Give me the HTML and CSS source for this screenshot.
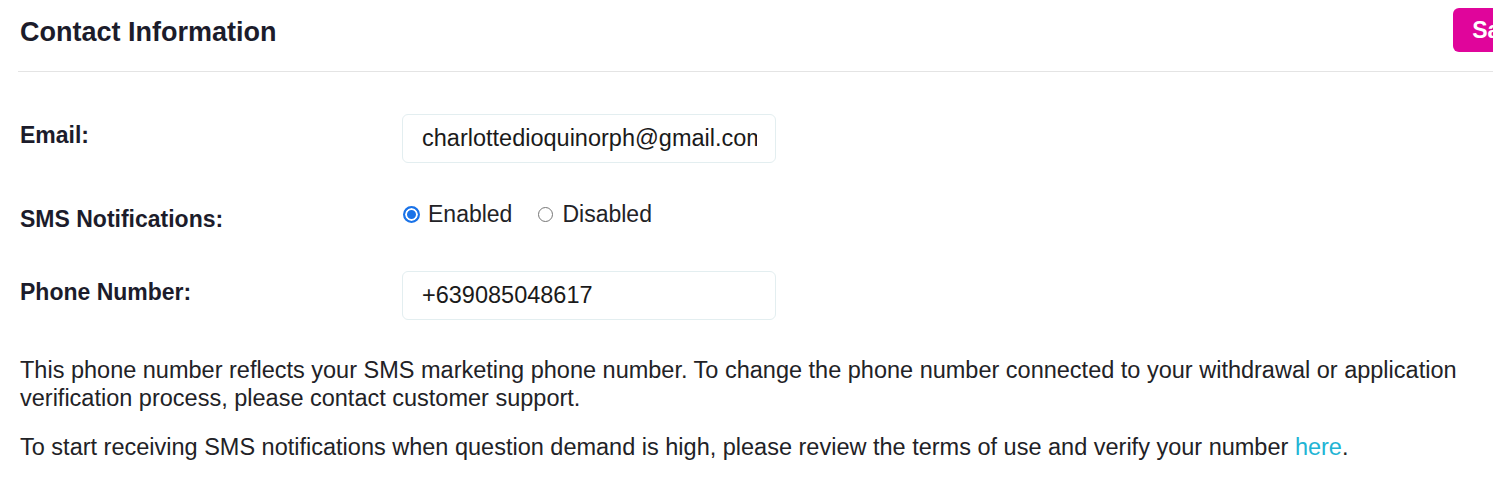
FILE: index.html
```html
<!DOCTYPE html>
<html lang="en">
<head>
    <meta charset="UTF-8">
    <meta name="viewport" content="width=device-width, initial-scale=1.0">
    <title>Contact Information</title>
    <link rel="stylesheet" href="styles.css">
</head>
<body>
    <div class="panel">
        <!-- Cabecera con título y botón de guardar -->
        <div class="panel-header">
            <h2 class="panel-title">Contact Information</h2>
            <button class="btn-save">Save</button>
        </div>

        <!-- Formulario -->
        <div class="form">
            <div class="form-row">
                <label class="form-label" for="email">Email:</label>
                <input class="form-input" id="email" type="text" value="charlottedioquinorph@gmail.com">
            </div>

            <div class="form-row">
                <span class="form-label">SMS Notifications:</span>
                <div class="radio-group">
                    <label class="radio"><span class="radio-dot checked"></span>Enabled</label>
                    <label class="radio"><span class="radio-dot"></span>Disabled</label>
                </div>
            </div>

            <div class="form-row">
                <label class="form-label" for="phone">Phone Number:</label>
                <input class="form-input" id="phone" type="text" value="+639085048617">
            </div>
        </div>

        <p class="note">This phone number reflects your SMS marketing phone number. To change the phone number connected to your withdrawal or application verification process, please contact customer support.</p>
        <p class="note">To start receiving SMS notifications when question demand is high, please review the terms of use and verify your number <a href="#" class="link">here</a>.</p>
    </div>
</body>
</html>
```

FILE: styles.css
```css
body {
    margin: 0;
    padding: 0;
    background: #ffffff;
    font-family: "Liberation Sans", Arial, sans-serif;
    color: #222226;
    overflow: hidden;
}

/* Contenedor principal (más ancho que la ventana, el botón queda cortado) */
.panel {
    width: 1527px;
    padding-left: 18px;
}

/* Cabecera */
.panel-header {
    display: flex;
    justify-content: space-between;
    align-items: center;
    padding: 8px 0 19px;
    border-bottom: 1px solid #e4e4e4;
}

.panel-title {
    margin: 0 0 0 2px;
    font-size: 27px;
    font-weight: 700;
    color: #1c1c2b;
    line-height: 32px;
    position: relative;
    top: 2px;
}

.btn-save {
    height: 44px;
    padding: 0 19px;
    background: #e0059b;
    color: #ffffff;
    border: none;
    border-radius: 6px;
    font-family: inherit;
    font-size: 23px;
    font-weight: 700;
    cursor: pointer;
}

/* Filas del formulario */
.form {
    padding: 42px 0 0 2px;
    display: flex;
    flex-direction: column;
    gap: 35px;
}

.form-row {
    display: grid;
    grid-template-columns: 382px 374px;
    align-items: start;
}

.form-label {
    padding-top: 8px;
    font-size: 23px;
    font-weight: 700;
    line-height: 26px;
    color: #1c1c2b;
}

.form-input {
    box-sizing: border-box;
    width: 374px;
    height: 49px;
    padding: 0 18px 0 19px;
    border: 1px solid #e3eef0;
    border-radius: 6px;
    font-family: inherit;
    font-size: 23.5px;
    color: #1a1a1a;
    background: #ffffff;
    outline: none;
}

/* Botones de radio */
.radio-group {
    display: flex;
    align-items: center;
    gap: 26px;
    padding: 3px 0 9px 1px;
}

.radio {
    display: flex;
    align-items: center;
    font-size: 23px;
    line-height: 26px;
    color: #222226;
    cursor: pointer;
}

.radio-dot {
    box-sizing: border-box;
    width: 15px;
    height: 15px;
    margin-right: 9px;
    border: 1px solid #767676;
    border-radius: 50%;
    background: #ffffff;
}

.radio-dot.checked {
    width: 17px;
    height: 17px;
    margin-right: 8px;
    border: 2px solid #1a73e8;
    background: #1a73e8;
    box-shadow: inset 0 0 0 2px #ffffff;
}

/* Textos informativos */
.note {
    margin: 36px 0 0 2px;
    font-size: 23.5px;
    line-height: 28px;
    color: #222226;
    width: 1460px;
}

.note + .note {
    margin-top: 21px;
}

.link {
    color: #22b4d4;
    text-decoration: none;
}
```
